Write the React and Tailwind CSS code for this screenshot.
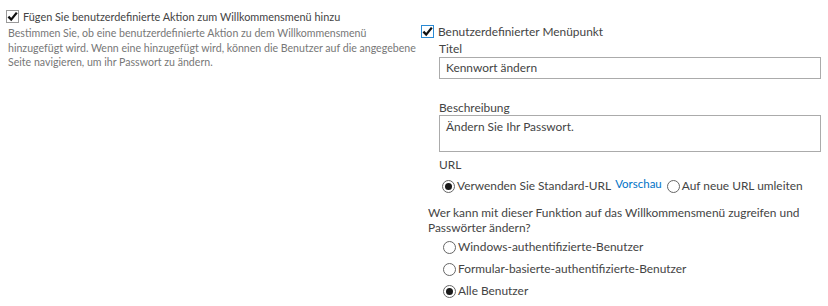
import React from "react";

function Check({ focus }) {
  return (
    <span
      className={`relative inline-block w-[13px] h-[13px] shrink-0 bg-white border ${
        focus ? "border-[#2a8ad4]" : "border-[#9a9a9a]"
      }`}
    >
      <svg viewBox="0 0 13 13" className="absolute left-[-1px] top-[-1px] w-[13px] h-[13px]">
        <path d="M2.4 6.6 L5.2 9.6 L10.8 2.6" fill="none" stroke="#111" strokeWidth="2.3" />
      </svg>
    </span>
  );
}

function Radio({ on }) {
  return (
    <span className="relative inline-flex items-center justify-center w-[13px] h-[13px] shrink-0 rounded-full border border-[#666] bg-white">
      {on && <span className="w-[7px] h-[7px] rounded-full bg-[#1a1a1a]" />}
    </span>
  );
}

export default function App() {
  return (
    <div className="w-[828px] h-[306px] bg-white flex text-[#444] font-['Lato',sans-serif] overflow-hidden whitespace-nowrap">
      <div className="w-[414px] shrink-0 pl-[6px] pt-[8px]">
        <div className="flex items-center gap-[4px] h-[17px] text-[10.9px] leading-[17px]">
          <Check />
          <span>Fügen Sie benutzerdefinierte Aktion zum Willkommensmenü hinzu</span>
        </div>
        <p className="mt-[1px] pl-[2px] text-[10.6px] leading-[14.5px] text-[#777]">
          Bestimmen Sie, ob eine benutzerdefinierte Aktion zu dem Willkommensmenü
          <br />
          hinzugefügt wird. Wenn eine hinzugefügt wird, können die Benutzer auf die angegebene
          <br />
          Seite navigieren, um ihr Passwort zu ändern.
        </p>
      </div>
      <div className="flex-1 pl-[7px] pt-[23px] text-[11.9px]">
        <div className="flex items-center gap-[4px] h-[17px] leading-[17px]">
          <Check focus />
          <span>Benutzerdefinierter Menüpunkt</span>
        </div>
        <div className="ml-[18px] w-[382px]">
          <div className="h-[17px] leading-[17px]">Titel</div>
          <div className="h-[22px] border border-[#ababab] px-[6px] leading-[20px]">Kennwort ändern</div>
          <div className="mt-[21px] h-[15px] leading-[15px]">Beschreibung</div>
          <div className="h-[37px] border border-[#ababab] px-[6px] pt-[2px] leading-[17px]">Ändern Sie Ihr Passwort.</div>
          <div className="mt-[5px] h-[16px] leading-[16px]">URL</div>
          <div className="mt-[4px] h-[18px] flex items-center pl-[3px] leading-[18px]">
            <Radio on />
            <span className="ml-[2px]">Verwenden Sie Standard-URL</span>
            <span className="ml-[4px] text-[#0072c6] text-[11.5px] relative top-[-2px]">Vorschau</span>
            <span className="ml-[5px] flex"><Radio /></span>
            <span className="ml-[2px]">Auf neue URL umleiten</span>
          </div>
        </div>
        <div className="ml-[7px] mt-[10px] leading-[15px]">
          Wer kann mit dieser Funktion auf das Willkommensmenü zugreifen und
          <br />
          Passwörter ändern?
        </div>
        <div className="ml-[22px] mt-[3px] flex flex-col gap-[4px]">
          <div className="flex items-center h-[18px] leading-[18px]"><Radio /><span className="ml-[2px]">Windows-authentifizierte-Benutzer</span></div>
          <div className="flex items-center h-[18px] leading-[18px]"><Radio /><span className="ml-[2px]">Formular-basierte-authentifizierte-Benutzer</span></div>
          <div className="flex items-center h-[18px] leading-[18px]"><Radio on /><span className="ml-[2px]">Alle Benutzer</span></div>
        </div>
      </div>
    </div>
  );
}
